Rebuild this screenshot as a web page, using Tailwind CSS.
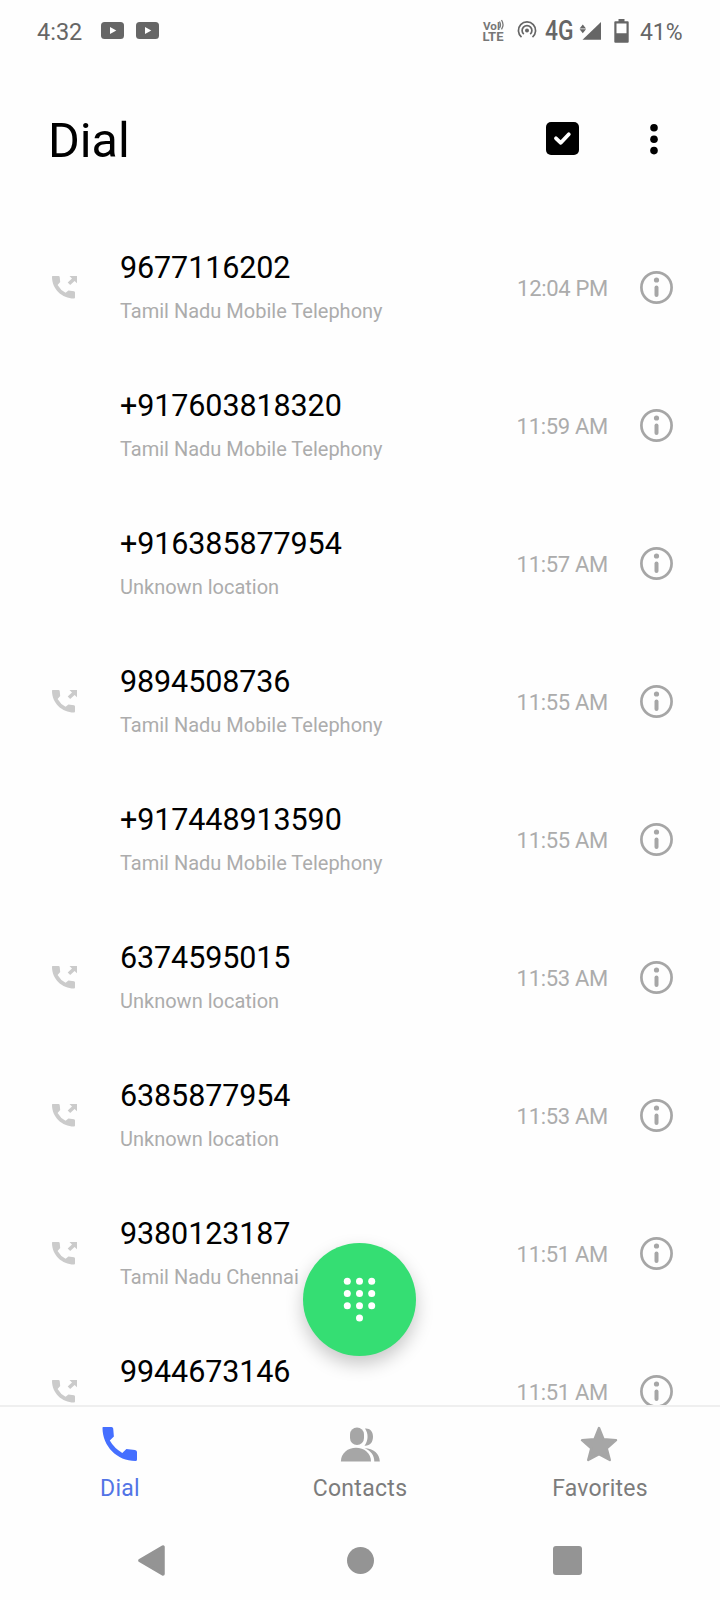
<!DOCTYPE html>
<html lang="en">
<head>
    <meta charset="UTF-8">
    <meta name="viewport" content="width=device-width, initial-scale=1.0">
    <title>Dial</title>
    <script src="https://cdn.jsdelivr.net/npm/@tailwindcss/browser@4"></script>
</head>
<body class="bg-[#fefefe] font-['Roboto',sans-serif] text-black">
    <div class="relative flex flex-col w-[720px] h-[1600px] overflow-hidden">

        <!-- Status bar -->
        <div class="flex items-center h-[60px] pl-[37px] pr-[37px] pt-1 text-[#666]">
            <span class="w-16 text-[23.5px] leading-7">4:32</span>
            <svg class="-mt-1 w-[23px] h-[17px]" viewBox="0 0 23 17"><rect width="23" height="17" rx="3.5" fill="#666"/><path d="M9 5v7l6.3-3.5z" fill="#fff"/></svg>
            <svg class="-mt-1 ml-3 w-[23px] h-[17px]" viewBox="0 0 23 17"><rect width="23" height="17" rx="3.5" fill="#666"/><path d="M9 5v7l6.3-3.5z" fill="#fff"/></svg>

            <svg class="ml-auto -mt-1 w-[202px] h-8" viewBox="481 14 202 32" fill="#666" font-family="Roboto, sans-serif">
                <g font-weight="700" fill="#777">
                    <text x="483" y="29.5" font-size="11.5" textLength="17" lengthAdjust="spacingAndGlyphs">Vol</text>
                    <text x="482.5" y="41.2" font-size="13" textLength="21" lengthAdjust="spacingAndGlyphs">LTE</text>
                </g>
                <path d="M499.500 21.500q2 3.500 0 6.500M501.500 20q3 4.600 0 9.400" fill="none" stroke="#777" stroke-width="1.300"/>
                <circle cx="527" cy="30.6" r="2"/>
                <g fill="none" stroke="#666" stroke-width="1.7">
                    <path d="M523.8 34.2a4.9 4.9 0 1 1 6.4 0"/>
                    <path d="M521.5 37.1a8.6 8.6 0 1 1 11 0"/>
                </g>
                <text x="545" y="40.3" font-size="27" font-weight="500" textLength="28.5" lengthAdjust="spacingAndGlyphs">4G</text>
                <path d="M582.8 24.5l3.2 4h-6.4zM582.8 33.3l3.2-4h-6.4z"/>
                <path d="M601 22v17.8h-18.5z"/>
                <path d="M618.5 19h6v2.2h3.2a1 1 0 0 1 1 1v19.6a1 1 0 0 1-1 1h-12.4a1 1 0 0 1-1-1V22.2a1 1 0 0 1 1-1h3.2zM616.5 23.5v9.800h10v-9.800z" fill-rule="evenodd"/>
                <text x="640" y="40" font-size="23" textLength="42.5">41%</text>
            </svg>
        </div>

        <!-- Title -->
        <div class="flex items-center h-[158px] pl-12 pr-[62px]">
            <h1 class="flex-1 mt-1 text-[48.5px] leading-[56px]">Dial</h1>
            <svg class="w-[33px] h-[33px] -mt-px" viewBox="0 0 33 33"><rect width="33" height="33" rx="5"/><path d="M10 16.300l4.800 4.500 8-8.500" fill="none" stroke="#fff" stroke-width="3.800" stroke-linecap="round" stroke-linejoin="round"/></svg>
            <svg class="ml-[71px] w-2 h-8" viewBox="0 0 8 32"><circle cx="4" cy="4.8" r="3.8"/><circle cx="4" cy="16.3" r="3.8"/><circle cx="4" cy="27.6" r="3.8"/></svg>
        </div>

        <!-- Call log -->
        <div id="calls" class="flex-none h-[1187px] overflow-hidden"></div>

        <!-- Tabs -->
        <div class="grid grid-cols-3 flex-none h-[115px] border-t-2 border-[#efefef] text-[23px] leading-7 text-[#7c7c7c] tracking-[0.3px]">
            <div class="flex flex-col items-center pt-[19px] text-[#5274e6]">
                <svg class="w-[36px] h-[36px] mb-[13px] mr-[3px]" viewBox="0 0 36 36"><path d="M2 1H10.500Q12 1 12.200 2.500L12.900 10.500L8.800 14.600Q13.300 22.500 21.300 26.900L25.400 23L34 24Q36 24.400 36 26V33.500Q36 35 34.500 35C16 35 1.500 20 1.500 2Q1.500 1 2 1z" fill="#456fff"/></svg>
                <span>Dial</span>
            </div>
            <div class="flex flex-col items-center pt-[19px]">
                <svg class="w-[40px] h-[36px] mb-[13px]" viewBox="0 0 40 36" fill="#a6a6a6">
                    <rect x="10" y="1.500" width="14" height="17.500" rx="7"/>
                    <path d="M25 2.500C30 2 33 5.500 33 10.500C33 16.500 30 20 24.500 19.700C28.500 14.500 28.500 7.500 25 2.500z"/>
                    <path d="M.900 35.500C.900 27 8 21.800 16 21.800S31 27 31 35.500z"/>
                    <path d="M24.500 22.300C33.500 22.500 39.800 28 39.800 35.500H34.300C34.300 29.500 31 25 24.500 22.300z"/>
                </svg>
                <span>Contacts</span>
            </div>
            <div class="flex flex-col items-center pt-[19px] tracking-[0.2px]">
                <svg class="w-[38px] h-[36px] mb-[13px] mr-0.5" viewBox="0 0 38 36"><path d="M19 2L23.500 13.200L36 14.200L26.700 22.300L29.800 34L19 28.300L8.200 34L11.300 22.300L2 14.200L14.500 13.200z" fill="#a6a6a6" stroke="#a6a6a6" stroke-width="2.400" stroke-linejoin="round"/></svg>
                <span>Favorites</span>
            </div>
        </div>

        <!-- System navigation -->
        <div class="flex flex-1 items-center justify-between pl-[138px] pr-[138px]">
            <svg class="w-[27px] h-[31px]" viewBox="0 0 27 31"><path d="M2 15.500L25 2V29z" fill="#949494" stroke="#949494" stroke-width="3.500" stroke-linejoin="round"/></svg>
            <div class="ml-[3px] w-[27px] h-[27px] rounded-full bg-[#949494]"></div>
            <div class="w-[29px] h-[29px] rounded-[3px] bg-[#949494]"></div>
        </div>

        <!-- Dialpad button -->
        <button class="absolute left-[303px] top-[1243px] w-[113px] h-[113px] rounded-full bg-[#35de73] shadow-[0_8px_18px_rgba(0,0,0,0.22)]">
            <svg class="w-full h-full" viewBox="0 0 113 113" fill="#fff">
                <circle cx="44.3" cy="38.2" r="3.5"/><circle cx="56.5" cy="38.2" r="3.5"/><circle cx="68.7" cy="38.2" r="3.5"/>
                <circle cx="44.3" cy="50.4" r="3.5"/><circle cx="56.5" cy="50.4" r="3.5"/><circle cx="68.7" cy="50.4" r="3.5"/>
                <circle cx="44.3" cy="62.7" r="3.5"/><circle cx="56.5" cy="62.7" r="3.5"/><circle cx="68.7" cy="62.7" r="3.5"/>
                <circle cx="56.5" cy="74.9" r="3.5"/>
            </svg>
        </button>
    </div>

    <script>
        const calls = [
            { number: '9677116202', place: 'Tamil Nadu Mobile Telephony', time: '12:04 PM', outgoing: true },
            { number: '+917603818320', place: 'Tamil Nadu Mobile Telephony', time: '11:59 AM' },
            { number: '+916385877954', place: 'Unknown location', time: '11:57 AM' },
            { number: '9894508736', place: 'Tamil Nadu Mobile Telephony', time: '11:55 AM', outgoing: true },
            { number: '+917448913590', place: 'Tamil Nadu Mobile Telephony', time: '11:55 AM' },
            { number: '6374595015', place: 'Unknown location', time: '11:53 AM', outgoing: true },
            { number: '6385877954', place: 'Unknown location', time: '11:53 AM', outgoing: true },
            { number: '9380123187', place: 'Tamil Nadu Chennai', time: '11:51 AM', outgoing: true },
            { number: '9944673146', place: '', time: '11:51 AM', outgoing: true },
        ];

        const outgoingIcon = `
            <svg class="w-[26px] h-[24px]" viewBox="0 0 26 24" fill="#cbcbcb">
                <path d="M.5 1H6.5Q7.5 1 7.7 2L8.2 7L5.600 9.900Q8.500 15 13.600 17.800L16.400 15.400L22 16.200Q23 16.400 23 17.400V22.500Q23 23.500 22 23.500C10 23.500 0 14 0 2Q0 1 .5 1z"/>
                <path d="M17.500 1H25V8.300L22.600 5.900L18.200 10L15.700 7.500L20 3.400z"/>
            </svg>`;

        document.getElementById('calls').innerHTML = calls.map(call => `
            <div class="flex items-center h-[138px] pl-[52px] pr-[47px]">
                <div class="w-[68px]">${call.outgoing ? outgoingIcon : ''}</div>
                <div class="flex-1 h-[74px]">
                    <div class="text-[30.5px] leading-9 tracking-[-0.1px]">${call.number}</div>
                    <div class="mt-[13px] text-[20px] leading-6 text-[#acacac]">${call.place}</div>
                </div>
                <div class="mt-[3px] mr-8 text-[22px] leading-7 tracking-[-0.3px] text-[#acacac]">${call.time}</div>
                <svg class="w-[33px] h-[33px]" viewBox="0 0 33 33">
                    <circle cx="16.5" cy="16.5" r="15.1" fill="none" stroke="#a6a6a6" stroke-width="2.7"/>
                    <circle cx="16.5" cy="9" r="2.6" fill="#a6a6a6"/>
                    <rect x="14.5" y="14.5" width="4" height="11.5" rx="2" fill="#a6a6a6"/>
                </svg>
            </div>`).join('');
    </script>
</body>
</html>
